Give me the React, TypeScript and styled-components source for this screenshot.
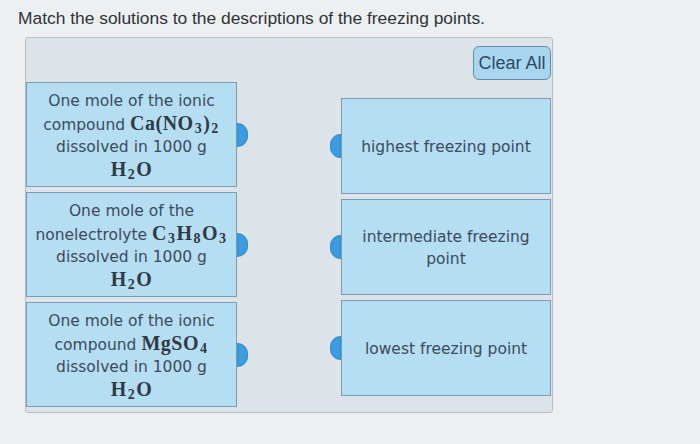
import styled, { createGlobalStyle } from "styled-components";

const GlobalStyle = createGlobalStyle`
  html, body {
    margin: 0;
    padding: 0;
    background: #eeeff0;
  }
`;

const Page = styled.div`
  width: 700px;
  height: 444px;
  padding: 7px 0 0 0;
  box-sizing: border-box;
  background: #eeeff0;
  font-family: "Liberation Sans", Arial, sans-serif;
`;

const Prompt = styled.h1`
  margin: 0 0 0 18px;
  font-size: 17.4px;
  line-height: 22px;
  font-weight: normal;
  color: #2e3338;
`;

const Panel = styled.section`
  margin: 8px 0 0 25px;
  width: 528px;
  box-sizing: border-box;
  padding: 8px 1px 5px 0;
  background: #dce3e9;
  border: 1px solid #b3bec8;
  border-radius: 3px;
  display: flex;
  flex-direction: column;
`;

const Toolbar = styled.div`
  display: flex;
  justify-content: flex-end;
`;

const ClearButton = styled.button`
  width: 78px;
  height: 34px;
  padding: 0;
  background: #a9d6ee;
  border: 1px solid #5f8cab;
  border-radius: 6px;
  font-family: "Liberation Sans", Arial, sans-serif;
  font-size: 18px;
  color: #2a4a66;
  cursor: pointer;
`;

const Board = styled.div`
  display: grid;
  grid-template-columns: 211px 1fr 210px;
  margin-top: 2px;
`;

const Column = styled.div<{ $offset?: number }>`
  display: flex;
  flex-direction: column;
  gap: 5px;
  padding-top: ${(p) => p.$offset ?? 0}px;
`;

const Card = styled.div<{ $height: number }>`
  position: relative;
  height: ${(p) => p.$height}px;
  box-sizing: border-box;
  padding-top: 2px;
  display: flex;
  flex-direction: column;
  align-items: center;
  justify-content: center;
  background: #b6def3;
  border: 1px solid #7c9ab2;
  font-family: "DejaVu Sans", Verdana, sans-serif;
  font-size: 15.5px;
  line-height: 22px;
  color: #3a4b5c;
  text-align: center;
`;

const Line = styled.span`
  display: block;
  white-space: nowrap;
`;

const Handle = styled.span<{ $side: "left" | "right" }>`
  position: absolute;
  top: 50%;
  width: 11px;
  height: 24px;
  margin-top: -12px;
  background: #3b9ce2;
  box-shadow: inset 0 0 2px rgba(20, 80, 140, 0.5);
  ${(p) =>
    p.$side === "right"
      ? "right: -12px; border-radius: 0 12px 12px 0;"
      : "left: -12px; border-radius: 12px 0 0 12px;"}
`;

const Chem = styled.span`
  font-family: "Liberation Serif", "Times New Roman", serif;
  font-size: 20px;
  color: #2f3a44;
  font-weight: 600;
  letter-spacing: 0.5px;
`;

const Sub = styled.sub`
  font-size: 14px;
  vertical-align: -3px;
  line-height: 0;
  margin: 0 1px;
`;

const Water = () => (
  <Chem>
    H<Sub>2</Sub>O
  </Chem>
);

const solutions = [
  {
    first: "One mole of the ionic",
    lead: "compound",
    formula: (
      <Chem>
        Ca(NO<Sub>3</Sub>)<Sub>2</Sub>
      </Chem>
    ),
  },
  {
    first: "One mole of the",
    lead: "nonelectrolyte",
    formula: (
      <Chem>
        C<Sub>3</Sub>H<Sub>8</Sub>O<Sub>3</Sub>
      </Chem>
    ),
  },
  {
    first: "One mole of the ionic",
    lead: "compound",
    formula: (
      <Chem>
        MgSO<Sub>4</Sub>
      </Chem>
    ),
  },
];

const descriptions = [
  ["highest freezing point"],
  ["intermediate freezing", "point"],
  ["lowest freezing point"],
];

export default function App() {
  return (
    <Page>
      <GlobalStyle />
      <Prompt>Match the solutions to the descriptions of the freezing points.</Prompt>
      <Panel>
        <Toolbar>
          <ClearButton>Clear All</ClearButton>
        </Toolbar>
        <Board>
          <Column>
            {solutions.map((s, i) => (
              <Card key={i} $height={105}>
                <Line>{s.first}</Line>
                <Line>
                  {s.lead} {s.formula}
                </Line>
                <Line>dissolved in 1000 g</Line>
                <Line>
                  <Water />
                </Line>
                <Handle $side="right" />
              </Card>
            ))}
          </Column>
          <div />
          <Column $offset={16}>
            {descriptions.map((lines, i) => (
              <Card key={i} $height={96}>
                {lines.map((l) => (
                  <Line key={l}>{l}</Line>
                ))}
                <Handle $side="left" />
              </Card>
            ))}
          </Column>
        </Board>
      </Panel>
    </Page>
  );
}
